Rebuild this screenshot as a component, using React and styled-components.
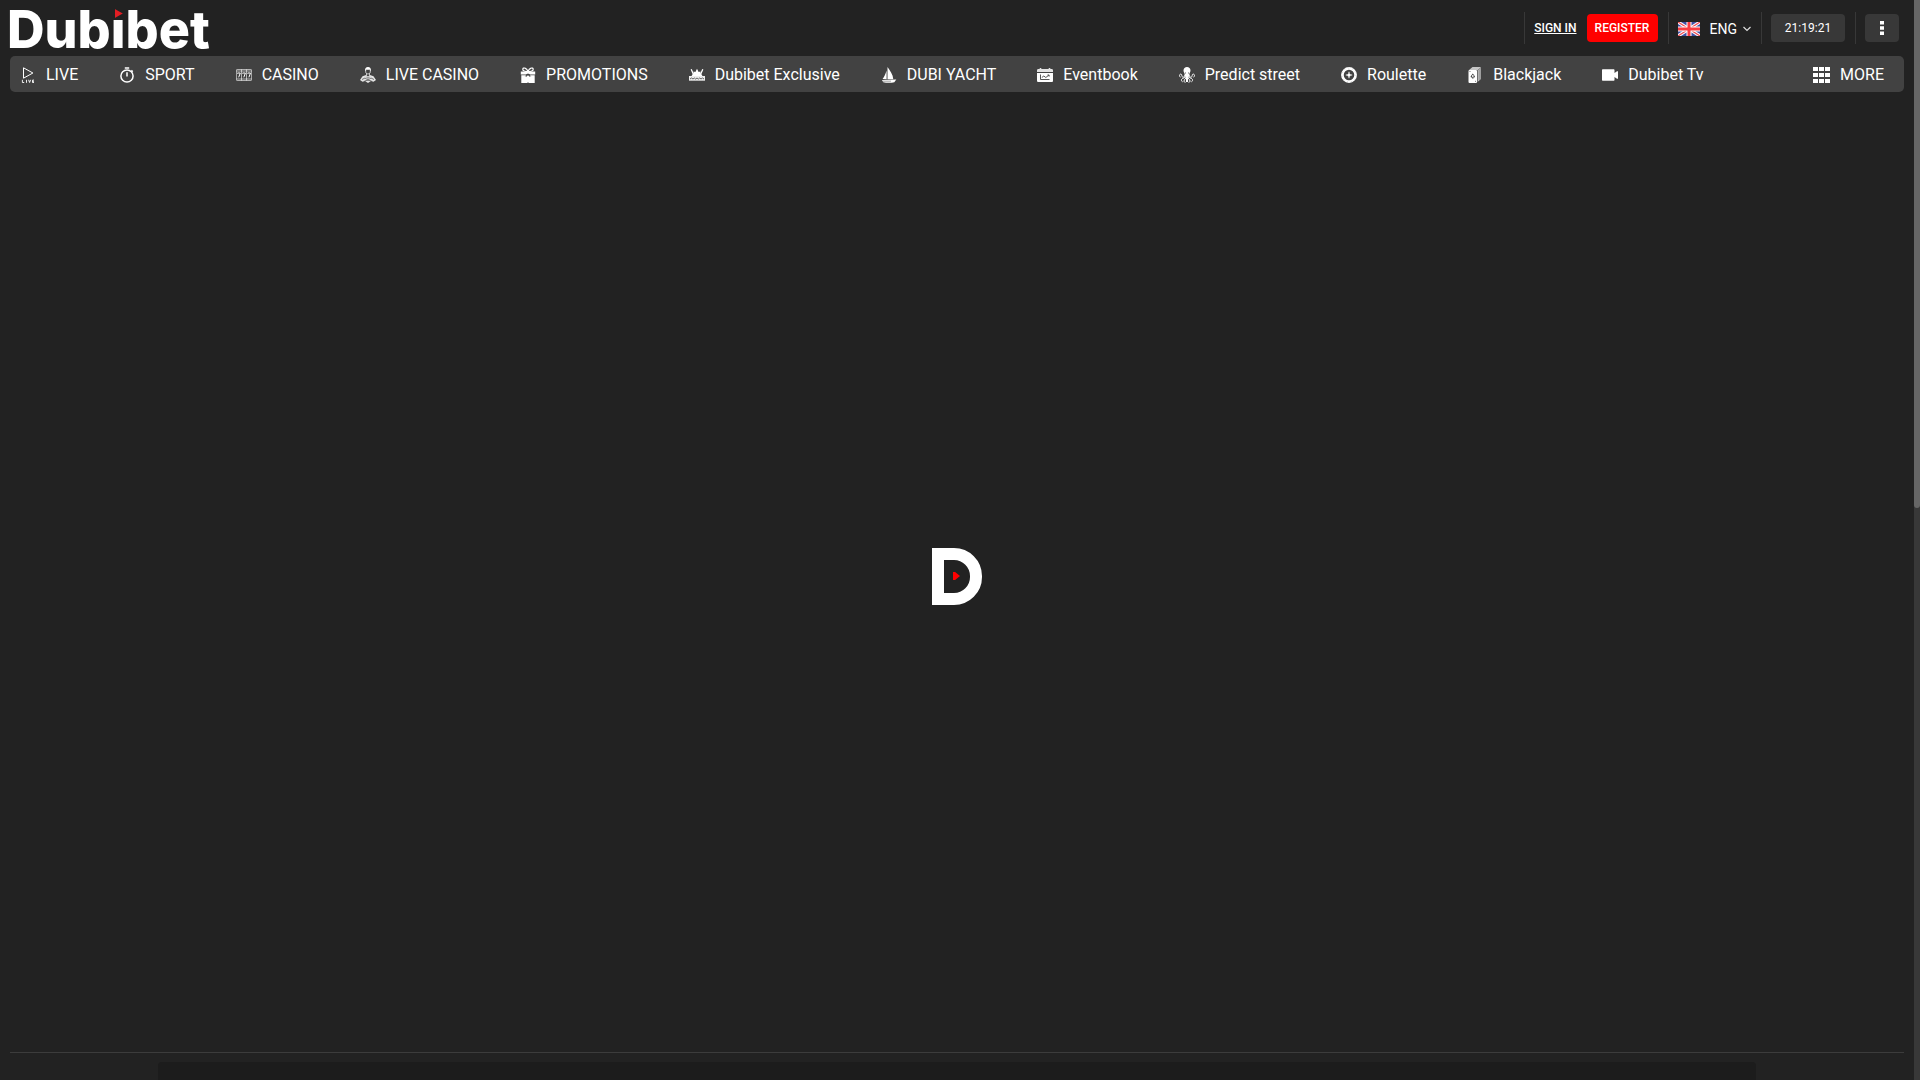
import React from 'react';
import styled, { createGlobalStyle } from 'styled-components';

const GlobalStyle = createGlobalStyle`
  * {
    box-sizing: border-box;
  }

  body {
    margin: 0;
    background: #222222;
    color: #ffffff;
    font-family: Roboto, 'Liberation Sans', sans-serif;
  }

  a {
    color: inherit;
    text-decoration: none;
  }

  button {
    font-family: inherit;
    color: inherit;
    border: 0;
    cursor: pointer;
  }
`;

// Page on the left, scroll rail on the right
const Shell = styled.div`
  display: grid;
  grid-template-columns: minmax(0, 1fr) 6px;
  height: 100vh;
  overflow: hidden;
`;

const Page = styled.div`
  padding: 0 10px;
  overflow: hidden;
`;

const ScrollRail = styled.div`
  background: #383838;
`;

const ScrollThumb = styled.div`
  height: 47%;
  background: #666666;
  border-radius: 0 0 3px 3px;
`;

const Header = styled.header`
  display: flex;
  align-items: center;
  justify-content: space-between;
  height: 56px;
  padding-right: 5px;
`;

// Wordmark with a play arrow in place of the dot
const Wordmark = styled.a`
  margin: 4px 0 0 -3px;
  font-family: Inter, sans-serif;
  font-size: 52px;
  font-weight: 800;
  line-height: 60px;
`;

const DottedLetter = styled.span`
  position: relative;

  &::before {
    content: '';
    position: absolute;
    top: 6px;
    left: 0;
    width: 100%;
    height: 16px;
    background: #222222;
  }

  &::after {
    content: '';
    position: absolute;
    top: 11px;
    left: 4px;
    width: 8px;
    height: 9px;
    background: #e31e24;
    clip-path: polygon(0 0, 100% 50%, 0 100%);
  }
`;

const Controls = styled.div`
  display: flex;
  align-items: center;
`;

const ControlGroup = styled.div`
  display: flex;
  align-items: center;
  gap: 10px;
  height: 32px;
  padding: 0 10px 0 9px;
  border-left: 1px solid #383838;

  &:last-child {
    padding-right: 0;
  }
`;

const SignIn = styled.a`
  font-size: 12px;
  font-weight: 500;
  text-decoration: underline;
`;

const PillButton = styled.button`
  display: flex;
  align-items: center;
  justify-content: center;
  width: ${({ $width }) => $width}px;
  height: 28px;
  padding: 0;
  border-radius: 4px;
  background: ${({ $primary }) => ($primary ? '#ff0000' : '#383838')};
  font-size: 12px;
  font-weight: ${({ $primary }) => ($primary ? 500 : 400)};
`;

const Language = styled.button`
  display: flex;
  align-items: center;
  padding: 2px 0 0;
  background: none;
  font-size: 14px;

  span {
    margin: 0 6px 0 10px;
  }
`;

const Nav = styled.nav`
  display: flex;
  align-items: center;
  gap: 41px;
  height: 36px;
  padding: 2px 20px 0 10px;
  border-radius: 5px;
  background: #424242;
`;

const NavItem = styled.a`
  display: flex;
  align-items: center;
  gap: 10px;
  font-size: 16px;
  line-height: 20px;
  white-space: nowrap;
`;

const MoreButton = styled.button`
  display: flex;
  align-items: center;
  gap: 10px;
  margin-left: auto;
  padding: 0;
  background: none;
  font-size: 16px;
  line-height: 20px;
`;

const Stage = styled.main`
  display: flex;
  align-items: center;
  justify-content: center;
  min-height: calc(100vh - 128px);
  margin-top: 8px;
`;

// Loader mark
const LoaderMark = styled.div`
  display: flex;
  align-items: center;
  width: 50px;
  height: 57px;
  padding-left: 9px;
  border: 12px solid #ffffff;
  border-radius: 0 28px 28px 0;
`;

const LoaderArrow = styled.div`
  width: 7px;
  height: 8px;
  background: #ff0000;
  clip-path: polygon(0 0, 30% 0, 100% 50%, 30% 100%, 0 100%);
`;

const Footer = styled.footer`
  padding-top: 9px;
  border-top: 1px solid #3c3c3c;
`;

const FooterPanel = styled.div`
  max-width: 1598px;
  min-height: 200px;
  margin: 0 auto;
  border-radius: 4px;
  background: #1c1c1c;
`;

const Icon = ({ children, size = 16 }) => (
  <svg width={size} height={size} viewBox="0 0 16 16" fill="#fff" aria-hidden="true">
    {children}
  </svg>
);

const LiveIcon = () => (
  <Icon>
    <path d="M3.500 0.800v10.400L12.900 6z" fill="none" stroke="#fff" strokeWidth="1" />
    <path
      d="M2.400 12.800v2.700h1.800M6.500 12.800v3M8.600 12.800l1 2.700 1-2.700M14 13.100h-1.500v2.400H14M12.500 14.300H14"
      fill="none"
      stroke="#fff"
      strokeWidth="0.900"
    />
  </Icon>
);

const SportIcon = () => (
  <Icon>
    <g fill="none" stroke="#fff" strokeWidth="1.500">
      <circle cx="8" cy="9" r="6.100" />
      <path d="M5.800 0.900h4.400M8 5.300v4.200M12.400 3.400l1.300 1.300" />
    </g>
  </Icon>
);

const CasinoIcon = () => (
  <Icon>
    <g fill="none" stroke="#fff" strokeWidth="0.600">
      <rect x="0.400" y="2.500" width="15.200" height="11" rx="0.700" />
      <path d="M0.400 4h15.200M0.400 12h15.200M5.500 2.500v11M10.500 2.500v11" />
      <path d="M1.500 6.500V6h2.800L2.700 10.300M6.600 6.500V6h2.800L7.800 10.300M11.700 6.500V6h2.800l-1.600 4.300" strokeWidth="1" />
    </g>
  </Icon>
);

const DealerIcon = () => (
  <Icon>
    <path d="M5 4.500C4.700 1.200 6 0 8 0s3.300 1.200 3 4.500l-1-1.800H6z" />
    <path
      d="M5.700 3v1.700c0 3 4.600 3 4.600 0V3M6.500 6.500v2M9.500 6.500v2"
      fill="none"
      stroke="#fff"
      strokeWidth="0.700"
    />
    <path d="M2.500 9.200l3.500-1.200L8 9.500 10 8l3.500 1.200L16 13l-2.500 1.700L11 14l-3 2-3-2-2.500.7L0 13z" opacity="0.850" />
    <path d="M2 12.500l3-1.500 3 2 3-2 3 1.500M4.500 14l3.500-.8 3.500.8M6.500 9.800L8 11.500l1.500-1.700" fill="none" stroke="#424242" strokeWidth="0.700" />
  </Icon>
);

const GiftIcon = () => (
  <Icon>
    <path d="M0.800 4.500h14.400v3H10L8 6.500 6 7.500H0.800zM1.300 8.300h5v1.500h3.400V8.300h5V16H8.700v-5.500H7.300V16h-6z" />
    <path d="M8 4.500C6.500.5 3 .2 2.800 2.200 2.700 3.800 5 4.500 8 4.500zM8 4.500c1.500-4 5-4.300 5.200-2.300C13.300 3.800 11 4.500 8 4.500z" fill="none" stroke="#fff" strokeWidth="1.200" />
    <path d="M8 8.500V15.500" stroke="#fff" strokeWidth="2" />
    <path d="M5.500 9.300C6 8 7 7.800 8 7.800s2 .2 2.500 1.500" fill="none" stroke="#424242" strokeWidth="1" />
  </Icon>
);

const CrownIcon = () => (
  <Icon>
    <path d="M8 1.800l1.600 3.200 1.900-.5V6l2 3h-11l2-3V4.500l1.900.5z" />
    <path d="M2.200 2.300l2.600 6M13.800 2.300l-2.600 6" stroke="#fff" strokeWidth="1.300" />
    <path d="M0 9h16v4.700H0z" opacity="0.900" />
    <path d="M1 12l1.500-1 1.500 1 1.300-1 1.300 1L8 11l1.400 1 1.300-1 1.300 1 1.500-1 1.500 1" fill="none" stroke="#424242" strokeWidth="0.800" />
  </Icon>
);

const YachtIcon = () => (
  <Icon>
    <path d="M6.500 0v12.300h5.800C12 7.500 9 3.500 6.500 0zM5.600 3.500C4.500 7 3.300 9.500 1.600 12.100l4 .2z" />
    <path d="M1 13.100l14.300-.6-2 2.700c-3 .8-8 .8-11 0z" />
    <path d="M2 14.200h8" stroke="#424242" strokeWidth="0.500" />
  </Icon>
);

const EventIcon = () => (
  <Icon>
    <path d="M0 3.500C0 2.500.5 2 1.500 2H2.700V1h1.600v1h7.400V1h1.600v1h1.200c1 0 1.500.5 1.500 1.500V5H0z" opacity="0.850" />
    <path d="M0 6h16v7.500c0 1-.5 1.500-1.500 1.500h-13C.5 15 0 14.500 0 13.500z" />
    <path d="M3.500 7.500v5h9M4.800 10.500l2-1.500 2 1.500 3-2.300M10.500 8h1.600v1.600" fill="none" stroke="#424242" strokeWidth="0.900" />
  </Icon>
);

const OctopusIcon = () => (
  <Icon>
    <path d="M4.500 3.500C4.500 1.200 6 0 8 0s3.500 1.200 3.500 3.500c0 1.500-1 2.500-1.200 3.500l.5 2H5.200l.5-2C5.500 6 4.500 5 4.500 3.500z" />
    <g fill="none" stroke="#fff" strokeWidth="1">
      <path d="M6 8.500C5 11 2.800 10.500 2.800 8.500S.5 6.800.5 8.500c0 1 .4 1.400 1 1.600M10 8.500c1 2.500 3.200 2 3.200 0s2.300-1.700 2.300 0c0 1-.4 1.400-1 1.600" />
      <path d="M6.500 9c-.5 2.500-3.500 2-4 3.500-.2 1 .3 2 1 2.300M9.500 9c.5 2.500 3.500 2 4 3.500.2 1-.3 2-1 2.300" />
      <path d="M7 9c.2 3.500-2 3-2 5 0 .8.700 1.500 1.500 1.300M9 9c-.2 3.500 2 3 2 5 0 .8-.7 1.500-1.500 1.300M7.500 9v6M8.500 9v6" />
    </g>
    <path d="M6 6h1M9 6h1" stroke="#424242" strokeWidth="0.800" />
  </Icon>
);

const RouletteIcon = () => (
  <Icon>
    <circle cx="8" cy="8" r="6.600" fill="none" stroke="#fff" strokeWidth="2.700" />
    <path d="M8 4.800v6.400M4.800 8h6.400" stroke="#fff" strokeWidth="1" />
    <circle cx="8" cy="8" r="1.600" />
    <circle cx="8" cy="8" r="7" fill="none" stroke="#aaa" strokeWidth="0.500" strokeDasharray="1 3" />
  </Icon>
);

const BlackjackIcon = () => (
  <Icon>
    <path d="M2 3L5.500 0h8.200v12.300L10.500 15V3z" opacity="0.700" />
    <rect x="1.500" y="3" width="8.500" height="13" rx="1" />
    <path d="M10.600 3.300L13.500.8M10.600 14.500V3.500M12.200 2.500v10.500" stroke="#555" strokeWidth="0.500" />
    <path d="M5.800 6.500L3.700 9.200c-.2 1.300 1.100 1.600 1.800 1l-.5 1.300h1.600l-.5-1.300c.7.6 2 .3 1.800-1z" fill="#424242" />
    <circle cx="5.800" cy="9" r="0.900" />
    <path d="M2.500 4.500h1M8 14.300h1" stroke="#555" strokeWidth="0.800" />
  </Icon>
);

const CameraIcon = () => (
  <Icon>
    <path d="M1 2.200h10.500c.7 0 1 .3 1 1V6L15 4.300h1v7.400h-1L12.500 10v2.800c0 .7-.3 1-1 1H1c-.7 0-1-.3-1-1V3.200c0-.7.300-1 1-1z" />
  </Icon>
);

const GridIcon = () => (
  <svg width="17" height="16" viewBox="0 0 17 16" fill="#fff" aria-hidden="true">
    <path d="M0 0h5v4H0zM6 0h5v4H6zM12 0h5v4h-5zM0 6h5v4H0zM6 6h5v4H6zM12 6h5v4h-5zM0 12h5v4H0zM6 12h5v4H6zM12 12h5v4h-5z" />
  </svg>
);

const FlagIcon = () => (
  <svg width="22" height="14" viewBox="0 0 22 14" aria-hidden="true">
    <rect width="22" height="14" fill="#3f4fa3" />
    <path d="M0 0l22 14M22 0L0 14" stroke="#fff" strokeWidth="3.200" />
    <path d="M0 0l22 14M22 0L0 14" stroke="#f04a50" strokeWidth="1.200" />
    <path d="M11 0v14M0 7h22" stroke="#fff" strokeWidth="5" />
    <path d="M11 0v14M0 7h22" stroke="#f93c42" strokeWidth="3" />
  </svg>
);

const ChevronIcon = () => (
  <svg width="8" height="6" viewBox="0 0 8 6" aria-hidden="true">
    <path d="M0.500 1L4 4.500 7.500 1" fill="none" stroke="#ddd" strokeWidth="1.200" />
  </svg>
);

const DotsIcon = () => (
  <svg width="4" height="14" viewBox="0 0 4 14" fill="#fff" aria-hidden="true">
    <path d="M0 0h4v3.600H0zM0 5.200h4v3.600H0zM0 10.400h4V14H0z" />
  </svg>
);

const navItems = [
  { label: 'LIVE', icon: LiveIcon },
  { label: 'SPORT', icon: SportIcon },
  { label: 'CASINO', icon: CasinoIcon },
  { label: 'LIVE CASINO', icon: DealerIcon },
  { label: 'PROMOTIONS', icon: GiftIcon },
  { label: 'Dubibet Exclusive', icon: CrownIcon },
  { label: 'DUBI YACHT', icon: YachtIcon },
  { label: 'Eventbook', icon: EventIcon },
  { label: 'Predict street', icon: OctopusIcon },
  { label: 'Roulette', icon: RouletteIcon },
  { label: 'Blackjack', icon: BlackjackIcon },
  { label: 'Dubibet Tv', icon: CameraIcon },
];

const App = () => {
  return (
    <>
      <GlobalStyle />
      <Shell>
        <Page>
          <Header>
            <Wordmark href="#">
              Dub<DottedLetter>i</DottedLetter>bet
            </Wordmark>
            <Controls>
              <ControlGroup>
                <SignIn href="#">SIGN IN</SignIn>
                <PillButton $primary $width={71}>REGISTER</PillButton>
              </ControlGroup>
              <ControlGroup>
                <Language>
                  <FlagIcon />
                  <span>ENG</span>
                  <ChevronIcon />
                </Language>
              </ControlGroup>
              <ControlGroup>
                <PillButton $width={74}>21:19:21</PillButton>
              </ControlGroup>
              <ControlGroup>
                <PillButton $width={34} aria-label="Settings">
                  <DotsIcon />
                </PillButton>
              </ControlGroup>
            </Controls>
          </Header>
          <Nav>
            {navItems.map(({ label, icon: ItemIcon }) => (
              <NavItem href="#" key={label}>
                <ItemIcon />
                {label}
              </NavItem>
            ))}
            <MoreButton>
              <GridIcon />
              MORE
            </MoreButton>
          </Nav>
          <Stage>
            <LoaderMark>
              <LoaderArrow />
            </LoaderMark>
          </Stage>
          <Footer>
            <FooterPanel />
          </Footer>
        </Page>
        <ScrollRail>
          <ScrollThumb />
        </ScrollRail>
      </Shell>
    </>
  );
};

export default App;
